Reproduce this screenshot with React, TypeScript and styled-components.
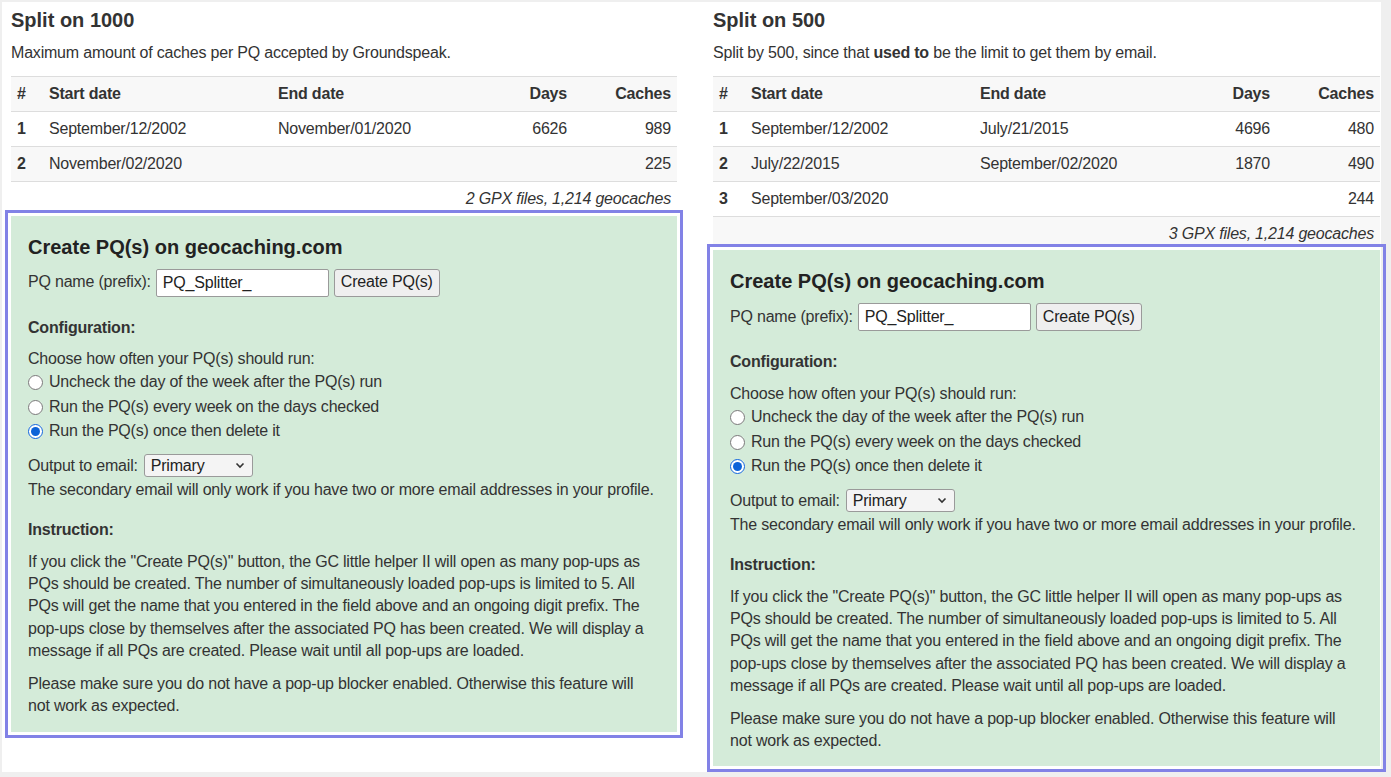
import React from 'react';
import styled, { createGlobalStyle } from 'styled-components';

const GlobalStyle = createGlobalStyle`
  html, body {
    margin: 0;
    padding: 0;
    background: #efefef;
  }
  body {
    font-family: "Liberation Sans", Arial, sans-serif;
    font-size: 16px;
    letter-spacing: -0.2px;
    color: #333;
  }
`;

const Page = styled.div`
  margin: 2px 0 0 2px;
  width: 1379px;
  min-height: 770px;
  box-sizing: border-box;
  padding: 6px 1px 0 9px;
  background: #fff;
  display: grid;
  grid-template-columns: 666px 667px;
  column-gap: 36px;
  align-items: start;
`;

const Section = styled.section`
  display: flex;
  flex-direction: column;
`;

const Title = styled.h2`
  margin: 0;
  font-size: 20px;
  line-height: 24px;
  font-weight: bold;
  letter-spacing: 0;
  color: #333;
`;

const Lead = styled.p`
  margin: 10px 0 12px;
  line-height: 22.4px;
`;

const SplitTable = styled.table`
  width: 100%;
  border-collapse: collapse;
  table-layout: fixed;
  line-height: 20.4px;

  thead tr {
    background: #f8f8f8;
  }
  tbody tr:nth-child(even) {
    background: #f8f8f8;
  }
`;

const Th = styled.th<{ $right?: boolean; $w?: number }>`
  text-align: ${p => (p.$right ? 'right' : 'left')};
  width: ${p => (p.$w ? `${p.$w}px` : 'auto')};
  padding: 7px 6px 6.5px;
  border-top: 1px solid #ddd;
  font-weight: bold;
`;

const Td = styled.td<{ $right?: boolean; $bold?: boolean }>`
  text-align: ${p => (p.$right ? 'right' : 'left')};
  font-weight: ${p => (p.$bold ? 'bold' : 'normal')};
  padding: 7px 6px 6.5px;
  border-top: 1px solid #ddd;
`;

const SummaryCell = styled.td`
  text-align: right;
  font-style: italic;
  padding: 7px 6px 0;
  border-top: 1px solid #ddd;
`;

const PqBox = styled.div`
  margin-top: 6px;
  background: #d4ebd9;
  padding: 19px 21px 14px 17px;
  outline: 3px solid #8282e6;
  outline-offset: 3px;
  line-height: 22.4px;
`;

const BoxTitle = styled.h3`
  margin: 0;
  font-size: 20px;
  line-height: 24px;
  font-weight: bold;
  letter-spacing: 0;
  color: #222;
`;

const FieldRow = styled.div<{ $mt: number; $h: number }>`
  display: flex;
  align-items: center;
  margin-top: ${p => p.$mt}px;
  height: ${p => p.$h}px;
  white-space: nowrap;
`;

const TextInput = styled.input`
  box-sizing: border-box;
  width: 173px;
  height: 28px;
  margin-left: 5px;
  padding: 0 6px;
  border: 1px solid #9a9a9a;
  border-radius: 2px;
  background: #fff;
  font: inherit;
  letter-spacing: inherit;
  color: #222;
`;

const Button = styled.button`
  box-sizing: border-box;
  height: 28px;
  margin-left: 5px;
  padding: 0 6px;
  border: 1px solid #9a9a9a;
  border-radius: 3px;
  background: #efefef;
  font: inherit;
  letter-spacing: inherit;
  color: #222;
`;

const SubHeading = styled.div<{ $mt: number }>`
  margin-top: ${p => p.$mt}px;
  font-weight: bold;
`;

const Text = styled.p<{ $mt: number }>`
  margin: ${p => p.$mt}px 0 0;
`;

const RadioRow = styled.label`
  display: flex;
  align-items: center;
  height: 24.5px;
  white-space: nowrap;
`;

const Radio = styled.input`
  width: 15px;
  height: 15px;
  margin: 0 6px 0 0;
  accent-color: #0d63d8;
`;

const SelectWrap = styled.span`
  position: relative;
  display: inline-flex;
  margin-left: 6px;
`;

const Select = styled.select`
  box-sizing: border-box;
  width: 109px;
  height: 23px;
  padding: 0 6px;
  border: 1px solid #9a9a9a;
  border-radius: 3px;
  background: #f4f4f4;
  font: inherit;
  letter-spacing: inherit;
  color: #222;
  appearance: none;
`;

const Chevron = styled.svg`
  position: absolute;
  right: 8px;
  top: 8px;
  pointer-events: none;
`;

type Row = { start: string; end: string; days: string; caches: string };

type Split = {
  title: string;
  lead: React.ReactNode;
  rows: Row[];
  summary: string;
};

const splits: Split[] = [
  {
    title: 'Split on 1000',
    lead: 'Maximum amount of caches per PQ accepted by Groundspeak.',
    rows: [
      { start: 'September/12/2002', end: 'November/01/2020', days: '6626', caches: '989' },
      { start: 'November/02/2020', end: '', days: '', caches: '225' },
    ],
    summary: '2 GPX files, 1,214 geocaches',
  },
  {
    title: 'Split on 500',
    lead: (
      <>
        Split by 500, since that <b>used to</b> be the limit to get them by email.
      </>
    ),
    rows: [
      { start: 'September/12/2002', end: 'July/21/2015', days: '4696', caches: '480' },
      { start: 'July/22/2015', end: 'September/02/2020', days: '1870', caches: '490' },
      { start: 'September/03/2020', end: '', days: '', caches: '244' },
    ],
    summary: '3 GPX files, 1,214 geocaches',
  },
];

const runOptions = [
  'Uncheck the day of the week after the PQ(s) run',
  'Run the PQ(s) every week on the days checked',
  'Run the PQ(s) once then delete it',
];

const CreatePqBox = ({ id }: { id: string }) => (
  <PqBox>
    <BoxTitle>Create PQ(s) on geocaching.com</BoxTitle>
    <FieldRow $mt={10} $h={28}>
      PQ name (prefix):
      <TextInput defaultValue="PQ_Splitter_" />
      <Button>Create PQ(s)</Button>
    </FieldRow>
    <SubHeading $mt={20}>Configuration:</SubHeading>
    <Text $mt={9}>Choose how often your PQ(s) should run:</Text>
    {runOptions.map((opt, i) => (
      <RadioRow key={opt}>
        <Radio type="radio" name={`run-${id}`} defaultChecked={i === 2} />
        {opt}
      </RadioRow>
    ))}
    <FieldRow $mt={9} $h={26}>
      Output to email:
      <SelectWrap>
        <Select defaultValue="primary">
          <option value="primary">Primary</option>
          <option value="secondary">Secondary</option>
        </Select>
        <Chevron width="10" height="7" viewBox="0 0 10 7">
          <path d="M1.5 1.5 L5 5 L8.5 1.5" fill="none" stroke="#333" strokeWidth="1.6" />
        </Chevron>
      </SelectWrap>
    </FieldRow>
    <Text $mt={0}>The secondary email will only work if you have two or more email addresses in your profile.</Text>
    <SubHeading $mt={18}>Instruction:</SubHeading>
    <Text $mt={9}>
      If you click the "Create PQ(s)" button, the GC little helper II will open as many pop-ups as PQs should be
      created. The number of simultaneously loaded pop-ups is limited to 5. All PQs will get the name that you
      entered in the field above and an ongoing digit prefix. The pop-ups close by themselves after the associated PQ
      has been created. We will display a message if all PQs are created. Please wait until all pop-ups are loaded.
    </Text>
    <Text $mt={10}>
      Please make sure you do not have a pop-up blocker enabled. Otherwise this feature will not work as expected.
    </Text>
  </PqBox>
);

const SplitSection = ({ split, id }: { split: Split; id: string }) => (
  <Section>
    <Title>{split.title}</Title>
    <Lead>{split.lead}</Lead>
    <SplitTable>
      <thead>
        <tr>
          <Th $w={20}>#</Th>
          <Th $w={217}>Start date</Th>
          <Th>End date</Th>
          <Th $w={88} $right>Days</Th>
          <Th $w={92} $right>Caches</Th>
        </tr>
      </thead>
      <tbody>
        {split.rows.map((r, i) => (
          <tr key={i}>
            <Td $bold>{i + 1}</Td>
            <Td>{r.start}</Td>
            <Td>{r.end}</Td>
            <Td $right>{r.days}</Td>
            <Td $right>{r.caches}</Td>
          </tr>
        ))}
        <tr>
          <SummaryCell colSpan={5}>{split.summary}</SummaryCell>
        </tr>
      </tbody>
    </SplitTable>
    <CreatePqBox id={id} />
  </Section>
);

export default function App() {
  return (
    <>
      <GlobalStyle />
      <Page>
        {splits.map((s, i) => (
          <SplitSection key={s.title} split={s} id={String(i)} />
        ))}
      </Page>
    </>
  );
}
